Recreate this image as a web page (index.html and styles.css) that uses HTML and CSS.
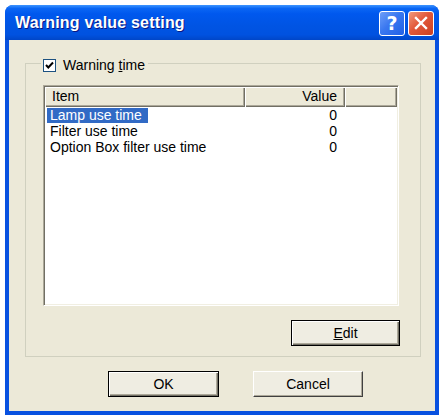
FILE: index.html
```html
<!DOCTYPE html>
<html>
<head>
<meta charset="utf-8">
<title>Warning value setting</title>
<link rel="stylesheet" href="styles.css">
</head>
<body>
<div class="window">
  <div class="titlebar">
    <span class="title">Warning value setting</span>
    <div class="tb-buttons">
      <span class="tb-btn help">?</span>
      <span class="tb-btn close">
        <svg width="14" height="14" viewBox="0 0 14 14"><path d="M2 2 L12 12 M12 2 L2 12" stroke="#fff" stroke-width="2.4" stroke-linecap="square"/></svg>
      </span>
    </div>
  </div>
  <div class="client">
    <fieldset class="group">
      <legend class="legend">
        <span class="checkbox">
          <svg width="11" height="11" viewBox="0 0 11 11"><path d="M2 5 L4.3 7.5 L9 2.5" fill="none" stroke="#000" stroke-width="2"/></svg>
        </span>
        <span class="legend-text">Warning <u>t</u>ime</span>
      </legend>
      <div class="list">
        <div class="header">
          <div class="hcell hitem">Item</div>
          <div class="hcell hvalue">Value</div>
          <div class="hcell hrest"></div>
        </div>
        <div class="rows">
          <div class="row"><div class="c-item"><span class="sel">Lamp use time</span></div><div class="c-val">0</div></div>
          <div class="row"><div class="c-item"><span class="txt">Filter use time</span></div><div class="c-val">0</div></div>
          <div class="row"><div class="c-item"><span class="txt">Option Box filter use time</span></div><div class="c-val">0</div></div>
        </div>
      </div>
      <div class="edit-row">
        <button class="btn btn-default edit"><u>E</u>dit</button>
      </div>
    </fieldset>
    <div class="dlg-buttons">
      <button class="btn btn-default">OK</button>
      <button class="btn btn-normal">Cancel</button>
    </div>
  </div>
</div>
</body>
</html>
```

FILE: styles.css
```css
html, body {
  margin: 0;
  padding: 0;
  background: #ffffff;
}
body {
  font-family: "Liberation Sans", Arial, sans-serif;
  font-size: 14px;
  color: #000;
}
.window {
  margin: 5px 0 0 5px;
  width: 434px;
  height: 410px;
  border-radius: 8px 8px 0 0;
  background: #0851e0;
  display: flex;
  flex-direction: column;
  overflow: hidden;
}
.titlebar {
  height: 35px;
  flex: none;
  display: flex;
  align-items: center;
  justify-content: space-between;
  padding: 1px 5px 0 10px;
  box-sizing: border-box;
  background: linear-gradient(to bottom, #3d95ff 0%, #0a66f4 10%, #0058ee 25%, #0054e3 60%, #0052e0 85%, #0046c8 100%);
}
.title {
  color: #fff;
  font-family: "Liberation Sans", Arial, sans-serif;
  font-weight: bold;
  font-size: 16px;
  letter-spacing: 0.2px;
  text-shadow: 1px 1px 0 #0a1883;
}
.tb-buttons {
  display: flex;
  gap: 3px;
}
.tb-btn {
  width: 26px;
  height: 25px;
  box-sizing: border-box;
  border: 1px solid #fff;
  border-radius: 3px;
  display: flex;
  align-items: center;
  justify-content: center;
  color: #fff;
}
.help {
  background: linear-gradient(135deg, #6d9ef8 0%, #3a78f0 45%, #2160e6 100%);
  font-family: "DejaVu Sans", sans-serif;
  font-weight: bold;
  font-size: 19px;
  line-height: 1;
}
.close {
  background: linear-gradient(135deg, #f09a7c 0%, #e2583a 45%, #cc4020 100%);
}
.client {
  flex: 1;
  margin: 0 4px 4px 4px;
  background: #ece9d8;
  display: flex;
  flex-direction: column;
}
.group {
  margin: 12px 0 0 16px;
  width: 396px;
  box-sizing: border-box;
  padding: 0 0 10px 0;
  border: 1px solid #d0d0bf;
  min-inline-size: 0;
}
.legend {
  margin-left: 15px;
  padding: 4px 3px 0 2px;
  height: 22px;
  box-sizing: border-box;
  display: flex;
  align-items: center;
  gap: 7px;
  line-height: 18px;
}
.checkbox {
  width: 13px;
  height: 13px;
  box-sizing: border-box;
  border: 1px solid #1c5180;
  background: #fff;
  display: flex;
  align-items: center;
  justify-content: center;
}
.list {
  margin: 11px 0 0 17px;
  width: 356px;
  height: 221px;
  box-sizing: border-box;
  background: #fff;
  border: 1px solid;
  border-color: #aca899 #ffffff #ffffff #aca899;
  box-shadow: inset 1px 1px 0 #716f64, inset -1px -1px 0 #f1efe2;
  padding: 1px;
}
.header {
  display: flex;
  height: 20px;
}
.hcell {
  box-sizing: border-box;
  height: 20px;
  background: #ece9d8;
  line-height: 19px;
  box-shadow: inset 1px 1px 0 #ffffff, inset -1px -1px 0 #716f64, inset -2px -2px 0 #aca899;
}
.hitem {
  width: 200px;
  padding-left: 7px;
}
.hvalue {
  width: 100px;
  text-align: right;
  padding-right: 8px;
}
.hrest {
  flex: 1;
}
.rows {
  padding-top: 1px;
}
.row {
  display: flex;
  height: 16px;
  line-height: 15px;
}
.c-item {
  width: 200px;
  padding-left: 2px;
  box-sizing: border-box;
}
.c-val {
  width: 100px;
  box-sizing: border-box;
  text-align: right;
  padding-right: 8px;
}
.sel {
  display: inline-block;
  background: #316ac5;
  color: #fff;
  padding: 0 6px 0 3px;
  height: 15px;
}
.txt {
  display: inline-block;
  padding-left: 3px;
}
.edit-row {
  display: flex;
  justify-content: flex-end;
  margin: 14px 20px 0 0;
}
.btn {
  font-family: "Liberation Sans", Arial, sans-serif;
  font-size: 14px;
  color: #000;
  height: 26px;
  width: 110px;
  box-sizing: border-box;
  background: #efede2;
  padding: 0;
  margin: 0;
  border-radius: 0;
}
.edit {
  width: 109px;
}
.btn-default {
  border: 1px solid #000;
  box-shadow: inset 1px 1px 0 #ffffff, inset -1px -1px 0 #716f64, inset -2px -2px 0 #aca899;
}
.btn-normal {
  border: 1px solid;
  border-color: #ffffff #404040 #404040 #ffffff;
  box-shadow: inset -1px -1px 0 #aca899;
}
.dlg-buttons {
  display: flex;
  gap: 34px;
  margin: 14px 0 0 99px;
}
.dlg-buttons .btn-default {
  width: 111px;
}
```
